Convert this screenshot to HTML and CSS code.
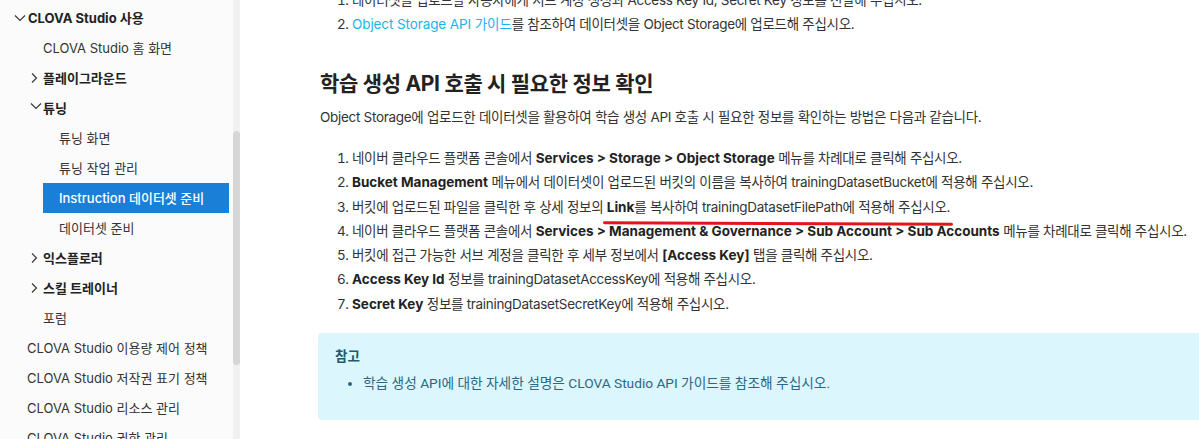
FILE: index.html
```html
<!DOCTYPE html>
<html lang="ko">
<head>
    <meta charset="UTF-8">
    <meta name="viewport" content="width=device-width, initial-scale=1.0">
    <title>학습 생성 API 호출 시 필요한 정보 확인</title>
    <link rel="stylesheet" href="styles.css">
</head>
<body>
    <div class="page">
        <aside class="sidebar">
            <nav class="nav">
                <div class="nav-item lv0 open strong">
                    <svg class="chev" width="12" height="8" viewBox="0 0 12 8"><path d="M1 1.5 L6 6.5 L11 1.5" fill="none" stroke="#333" stroke-width="1.1"/></svg>
                    CLOVA Studio 사용
                </div>
                <div class="nav-item lv1">CLOVA Studio 홈 화면</div>
                <div class="nav-item lv1 strong">
                    <svg class="chev" width="8" height="12" viewBox="0 0 8 12"><path d="M2 1.5 L6.5 6 L2 10.5" fill="none" stroke="#333" stroke-width="1.1"/></svg>
                    플레이그라운드
                </div>
                <div class="nav-item lv1 strong">
                    <svg class="chev" width="12" height="8" viewBox="0 0 12 8"><path d="M1 1.5 L6 6.5 L11 1.5" fill="none" stroke="#333" stroke-width="1.1"/></svg>
                    튜닝
                </div>
                <div class="nav-item lv2">튜닝 화면</div>
                <div class="nav-item lv2">튜닝 작업 관리</div>
                <div class="nav-item lv2 active">Instruction 데이터셋 준비</div>
                <div class="nav-item lv2">데이터셋 준비</div>
                <div class="nav-item lv1 strong">
                    <svg class="chev" width="8" height="12" viewBox="0 0 8 12"><path d="M2 1.5 L6.5 6 L2 10.5" fill="none" stroke="#333" stroke-width="1.1"/></svg>
                    익스플로러
                </div>
                <div class="nav-item lv1 strong">
                    <svg class="chev" width="8" height="12" viewBox="0 0 8 12"><path d="M2 1.5 L6.5 6 L2 10.5" fill="none" stroke="#333" stroke-width="1.1"/></svg>
                    스킬 트레이너
                </div>
                <div class="nav-item lv1">포럼</div>
                <div class="nav-item lv0 plain">CLOVA Studio 이용량 제어 정책</div>
                <div class="nav-item lv0 plain">CLOVA Studio 저작권 표기 정책</div>
                <div class="nav-item lv0 plain">CLOVA Studio 리소스 관리</div>
                <div class="nav-item lv0 plain">CLOVA Studio 권한 관리</div>
            </nav>
            <div class="scroll-track">
                <div class="scroll-thumb"></div>
            </div>
        </aside>

        <main class="content">
            <ol class="steps top-steps">
                <li>데이터셋을 업로드할 사용자에게 서브 계정 생성과 Access Key Id, Secret Key 정보를 전달해 주십시오.</li>
                <li><a href="#" class="link">Object Storage API 가이드</a>를 참조하여 데이터셋을 Object Storage에 업로드해 주십시오.</li>
            </ol>

            <h2>학습 생성 API 호출 시 필요한 정보 확인</h2>
            <p class="lead">Object Storage에 업로드한 데이터셋을 활용하여 학습 생성 API 호출 시 필요한 정보를 확인하는 방법은 다음과 같습니다.</p>

            <ol class="steps">
                <li>네이버 클라우드 플랫폼 콘솔에서 <b>Services &gt; Storage &gt; Object Storage</b> 메뉴를 차례대로 클릭해 주십시오.</li>
                <li><b>Bucket Management</b> 메뉴에서 데이터셋이 업로드된 버킷의 이름을 복사하여 trainingDatasetBucket에 적용해 주십시오.</li>
                <li>버킷에 업로드된 파일을 클릭한 후 상세 정보의 <span class="marked"><b>Link</b>를 복사하여 trainingDatasetFilePath에 적용해 주십시오.</span></li>
                <li>네이버 클라우드 플랫폼 콘솔에서 <b>Services &gt; Management &amp; Governance &gt; Sub Account &gt; Sub Accounts</b> 메뉴를 차례대로 클릭해 주십시오.</li>
                <li>버킷에 접근 가능한 서브 계정을 클릭한 후 세부 정보에서 <b>[Access Key]</b> 탭을 클릭해 주십시오.</li>
                <li><b>Access Key Id</b> 정보를 trainingDatasetAccessKey에 적용해 주십시오.</li>
                <li><b>Secret Key</b> 정보를 trainingDatasetSecretKey에 적용해 주십시오.</li>
            </ol>

            <div class="note">
                <p class="note-title">참고</p>
                <ul>
                    <li>학습 생성 API에 대한 자세한 설명은 CLOVA Studio API 가이드를 참조해 주십시오.</li>
                </ul>
            </div>
        </main>
    </div>
</body>
</html>
```

FILE: styles.css
```css
body {
    margin: 0;
    font-family: 'Inter', 'Noto Sans CJK KR', sans-serif;
    color: #333;
    background: #fff;
    overflow: hidden;
}
.page {
    display: flex;
    height: 439px;
    overflow: hidden;
}

/* 사이드바 */
.sidebar {
    flex: 0 0 240px;
    display: flex;
    background: #fbfbfb;
}
.nav {
    flex: 0 0 233px;
    padding-top: 3px;
}
.nav-item {
    position: relative;
    height: 30px;
    line-height: 30px;
    font-size: 13px;
    color: #333;
    margin-right: 4px;
    white-space: nowrap;
    padding-left: 16px;
}
.nav-item.lv0 {
    margin-left: 12px;
}
.nav-item.lv0.plain {
    margin-left: 11px;
}
.nav-item.lv1 {
    margin-left: 27px;
}
.nav-item.lv2 {
    margin-left: 43px;
}
.nav-item.strong {
    font-weight: 700;
    color: #222;
}
.nav-item.active {
    background: #1a7fd6;
    color: #fff;
    font-weight: 500;
}
.chev {
    position: absolute;
    left: 2px;
    top: 11px;
}
.nav-item.lv1 .chev {
    left: 3px;
    top: 9px;
}
.scroll-track {
    flex: 0 0 7px;
    background: #f1f1f1;
}
.scroll-thumb {
    margin-top: 131px;
    height: 234px;
    background: #d6d6d6;
    border-radius: 4px;
}

/* 본문 */
.content {
    flex: 0 0 1000px;
    padding-left: 80px;
    font-size: 13.5px;
    letter-spacing: -0.3px;
}
.steps {
    margin: 17px 0 0;
    padding-left: 32px;
}
.steps li {
    line-height: 24.3px;
}
.steps b {
    color: #222;
    letter-spacing: 0;
}
.top-steps {
    margin-top: -12px;
}
.top-steps li {
    line-height: 24px;
}
.link {
    color: #1ab3ea;
    text-decoration: none;
    letter-spacing: -0.1px;
}
h2 {
    margin: 33px 0 0;
    font-size: 21px;
    line-height: 30px;
    color: #222;
}
.lead {
    margin: 6px 0 0;
    line-height: 24px;
}
.marked {
    position: relative;
}
.marked::after {
    content: "";
    position: absolute;
    left: -4px;
    right: -3px;
    bottom: -10px;
    height: 3px;
    border-radius: 2px;
    background: #e3151b;
    transform: rotate(0.25deg);
}
.note {
    margin: 17px 0 0 -2px;
    padding: 13px 17px 27px;
    background: #dcf6fd;
    border-radius: 4px;
    font-family: 'Roboto', 'Noto Sans CJK KR', sans-serif;
    letter-spacing: 0;
    color: #2a6883;
}
.note-title {
    margin: 0;
    font-size: 13.5px;
    line-height: 20px;
    font-weight: 700;
    color: #1e5a74;
}
.note ul {
    margin: 7px 0 0;
    padding-left: 28px;
}
.note li {
    font-size: 13.7px;
    line-height: 20px;
}
```
